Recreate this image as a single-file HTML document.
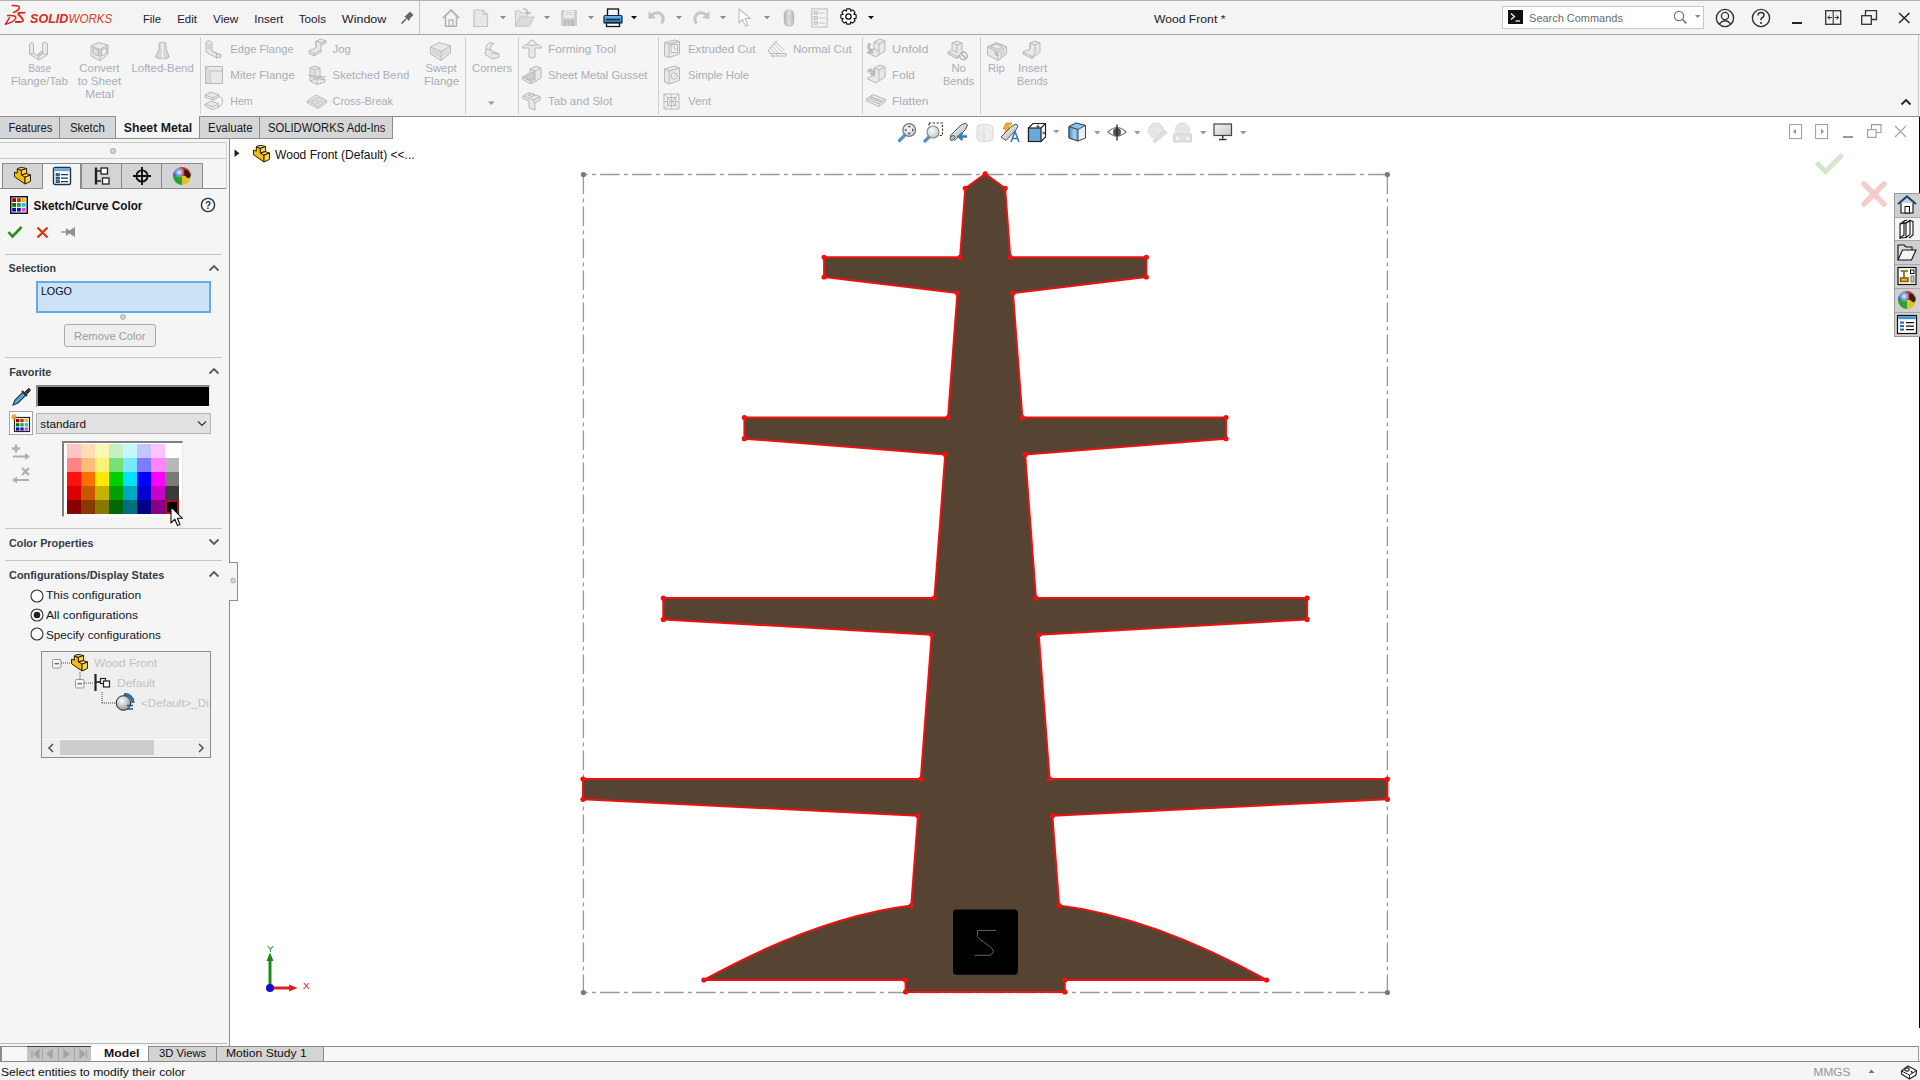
<!DOCTYPE html>
<html><head><meta charset="utf-8"><title>SOLIDWORKS</title>
<style>html,body{margin:0;padding:0;width:1920px;height:1080px;overflow:hidden;font-family:"Liberation Sans", sans-serif;}</style></head>
<body><div style="position:absolute;left:0;top:0;width:1920px;height:1080px;background:#f5f5f5;overflow:hidden"><div style="position:absolute;left:0px;top:0px;width:1920px;height:35px;background:#f4f4f4"></div><div style="position:absolute;left:0px;top:0px;width:1920px;height:1px;background:#b0b0b0"></div><div style="position:absolute;left:0px;top:34px;width:1920px;height:1px;background:#a4a4a4"></div><div style="position:absolute;left:419px;top:1px;width:1px;height:33px;background:#c4c4c4"></div><div style="position:absolute;left:0px;top:35px;width:1920px;height:81px;background:#f5f5f5"></div><div style="position:absolute;left:200px;top:37px;width:1px;height:77px;background:#d0d0d0"></div><div style="position:absolute;left:465px;top:37px;width:1px;height:77px;background:#d0d0d0"></div><div style="position:absolute;left:518px;top:37px;width:1px;height:77px;background:#d0d0d0"></div><div style="position:absolute;left:658px;top:37px;width:1px;height:77px;background:#d0d0d0"></div><div style="position:absolute;left:862px;top:37px;width:1px;height:77px;background:#d0d0d0"></div><div style="position:absolute;left:980px;top:37px;width:1px;height:77px;background:#d0d0d0"></div><div style="position:absolute;left:1918px;top:35px;width:1px;height:81px;background:#c8c8c8"></div><div style="position:absolute;left:230px;top:117px;width:1690px;height:929px;background:#ffffff"></div><div style="position:absolute;left:1919px;top:117px;width:1px;height:911px;background:#000"></div><div style="position:absolute;left:0px;top:116px;width:115px;height:1px;background:#8c8c8c"></div><div style="position:absolute;left:199px;top:116px;width:1721px;height:1px;background:#8c8c8c"></div><div style="position:absolute;left:0px;top:117px;width:59px;height:21px;background:#d6d6d6"></div><div style="position:absolute;left:59px;top:117px;width:56px;height:21px;background:#d6d6d6"></div><div style="position:absolute;left:115px;top:116px;width:84px;height:22px;background:#f5f5f5"></div><div style="position:absolute;left:199px;top:117px;width:60px;height:21px;background:#d6d6d6"></div><div style="position:absolute;left:259px;top:117px;width:133px;height:21px;background:#d6d6d6"></div><div style="position:absolute;left:59px;top:116px;width:1px;height:22px;background:#8c8c8c"></div><div style="position:absolute;left:115px;top:116px;width:1px;height:22px;background:#8c8c8c"></div><div style="position:absolute;left:199px;top:116px;width:1px;height:22px;background:#8c8c8c"></div><div style="position:absolute;left:259px;top:116px;width:1px;height:22px;background:#8c8c8c"></div><div style="position:absolute;left:392px;top:116px;width:1px;height:22px;background:#8c8c8c"></div><div style="position:absolute;left:0px;top:138px;width:393px;height:1px;background:#8a9090"></div><div style="position:absolute;left:0px;top:139px;width:229px;height:907px;background:#f5f5f5"></div><div style="position:absolute;left:229px;top:139px;width:1px;height:907px;background:#8c8c8c"></div><div style="position:absolute;left:0px;top:142px;width:226px;height:1px;background:#c9c9c9"></div><div style="position:absolute;left:226px;top:142px;width:1px;height:47px;background:#d4d4d4"></div><svg style="position:absolute;left:109px;top:147px;" width="8" height="8" viewBox="0 0 8 8"><circle cx="4" cy="4" r="2.6" fill="#d8d8d8" stroke="#a0a0a0" stroke-width="0.9"/></svg><div style="position:absolute;left:0px;top:158px;width:226px;height:1px;background:#c9c9c9"></div><div style="position:absolute;left:0px;top:188px;width:226px;height:1px;background:#8a8a8a"></div><div style="position:absolute;left:2px;top:163px;width:41px;height:26px;background:#d4d4d4;box-sizing:border-box;border:1px solid #8a8a8a"></div><div style="position:absolute;left:42px;top:163px;width:39px;height:26px;background:#f5f5f5;box-sizing:border-box;border:1px solid #8a8a8a;border-bottom:none"></div><div style="position:absolute;left:81px;top:163px;width:41px;height:26px;background:#d4d4d4;box-sizing:border-box;border:1px solid #8a8a8a"></div><div style="position:absolute;left:121px;top:163px;width:41px;height:26px;background:#d4d4d4;box-sizing:border-box;border:1px solid #8a8a8a"></div><div style="position:absolute;left:161px;top:163px;width:42px;height:26px;background:#d4d4d4;box-sizing:border-box;border:1px solid #8a8a8a"></div><div style="position:absolute;left:5px;top:254px;width:217px;height:1px;background:#c6c6c6"></div><div style="position:absolute;left:5px;top:357px;width:217px;height:1px;background:#c6c6c6"></div><div style="position:absolute;left:5px;top:528px;width:217px;height:1px;background:#c6c6c6"></div><div style="position:absolute;left:5px;top:560px;width:217px;height:1px;background:#c6c6c6"></div><svg style="position:absolute;left:0px;top:0px;" width="1920" height="1080" viewBox="0 0 1920 1080"><defs><linearGradient id="wood" x1="0" y1="0" x2="0" y2="1"><stop offset="0" stop-color="#594835"/><stop offset="1" stop-color="#5a4834"/></linearGradient></defs><path d="M583.4,174.5 H1387.4" fill="none" stroke="#999" stroke-width="1.3" stroke-dasharray="19.6 4.4 3.7 4.3" stroke-dashoffset="15.35"/><path d="M583.4,992.5 H1387.4" fill="none" stroke="#999" stroke-width="1.3" stroke-dasharray="19.6 4.4 3.7 4.3" stroke-dashoffset="15.35"/><path d="M583.4,174.5 V992.5" fill="none" stroke="#999" stroke-width="1.3" stroke-dasharray="19.6 4.4 3.7 4.3"/><path d="M1387.4,174.5 V992.5" fill="none" stroke="#999" stroke-width="1.3" stroke-dasharray="19.6 4.4 3.7 4.3"/><circle cx="583.4" cy="174.5" r="2.6" fill="#7a7a7a"/><circle cx="1387.4" cy="174.5" r="2.6" fill="#7a7a7a"/><circle cx="583.4" cy="992.5" r="2.6" fill="#7a7a7a"/><circle cx="1387.4" cy="992.5" r="2.6" fill="#7a7a7a"/><path d="M985.20,173.9 L1005.10,188.30 L1010.30,257.30 L1146.30,257.30 L1146.30,277.00 L1012.99,293.00 L1022.37,417.50 L1226.00,417.50 L1226.00,438.70 L1025.15,454.40 L1035.98,598.10 L1307.10,598.10 L1307.10,619.40 L1038.74,634.80 L1049.61,779.00 L1387.40,779.00 L1387.40,799.30 L1052.38,815.80 L1059.15,905.60 Q1152.00,917.00 1266.60,980.00 L1064.80,980.00 L1064.80,991.90 L905.60,991.90 L905.60,980.00 L703.80,980.00 Q818.40,917.00 911.25,905.60 L911.25,905.60 L918.02,815.80 L583.00,799.30 L583.00,779.00 L920.79,779.00 L931.66,634.80 L663.30,619.40 L663.30,598.10 L934.42,598.10 L945.25,454.40 L744.40,438.70 L744.40,417.50 L948.03,417.50 L957.41,293.00 L824.10,277.00 L824.10,257.30 L960.10,257.30 L965.30,188.30 Z" fill="#574332" stroke="#f01010" stroke-width="2" stroke-linejoin="round"/><circle cx="985.20" cy="173.90" r="2.6" fill="#f01010"/><circle cx="1005.10" cy="188.30" r="2.6" fill="#f01010"/><circle cx="1010.30" cy="257.30" r="2.6" fill="#f01010"/><circle cx="1146.30" cy="257.30" r="2.6" fill="#f01010"/><circle cx="1146.30" cy="277.00" r="2.6" fill="#f01010"/><circle cx="1012.99" cy="293.00" r="2.6" fill="#f01010"/><circle cx="1022.37" cy="417.50" r="2.6" fill="#f01010"/><circle cx="1226.00" cy="417.50" r="2.6" fill="#f01010"/><circle cx="1226.00" cy="438.70" r="2.6" fill="#f01010"/><circle cx="1025.15" cy="454.40" r="2.6" fill="#f01010"/><circle cx="1035.98" cy="598.10" r="2.6" fill="#f01010"/><circle cx="1307.10" cy="598.10" r="2.6" fill="#f01010"/><circle cx="1307.10" cy="619.40" r="2.6" fill="#f01010"/><circle cx="1038.74" cy="634.80" r="2.6" fill="#f01010"/><circle cx="1049.61" cy="779.00" r="2.6" fill="#f01010"/><circle cx="1387.40" cy="779.00" r="2.6" fill="#f01010"/><circle cx="1387.40" cy="799.30" r="2.6" fill="#f01010"/><circle cx="1052.38" cy="815.80" r="2.6" fill="#f01010"/><circle cx="1059.15" cy="905.60" r="2.6" fill="#f01010"/><circle cx="1266.60" cy="980.00" r="2.6" fill="#f01010"/><circle cx="1064.80" cy="980.00" r="2.6" fill="#f01010"/><circle cx="1064.80" cy="991.90" r="2.6" fill="#f01010"/><circle cx="965.30" cy="188.30" r="2.6" fill="#f01010"/><circle cx="960.10" cy="257.30" r="2.6" fill="#f01010"/><circle cx="824.10" cy="257.30" r="2.6" fill="#f01010"/><circle cx="824.10" cy="277.00" r="2.6" fill="#f01010"/><circle cx="957.41" cy="293.00" r="2.6" fill="#f01010"/><circle cx="948.03" cy="417.50" r="2.6" fill="#f01010"/><circle cx="744.40" cy="417.50" r="2.6" fill="#f01010"/><circle cx="744.40" cy="438.70" r="2.6" fill="#f01010"/><circle cx="945.25" cy="454.40" r="2.6" fill="#f01010"/><circle cx="934.42" cy="598.10" r="2.6" fill="#f01010"/><circle cx="663.30" cy="598.10" r="2.6" fill="#f01010"/><circle cx="663.30" cy="619.40" r="2.6" fill="#f01010"/><circle cx="931.66" cy="634.80" r="2.6" fill="#f01010"/><circle cx="920.79" cy="779.00" r="2.6" fill="#f01010"/><circle cx="583.00" cy="779.00" r="2.6" fill="#f01010"/><circle cx="583.00" cy="799.30" r="2.6" fill="#f01010"/><circle cx="918.02" cy="815.80" r="2.6" fill="#f01010"/><circle cx="911.25" cy="905.60" r="2.6" fill="#f01010"/><circle cx="703.80" cy="980.00" r="2.6" fill="#f01010"/><circle cx="905.60" cy="980.00" r="2.6" fill="#f01010"/><circle cx="905.60" cy="991.90" r="2.6" fill="#f01010"/><rect x="953" y="909.6" width="65" height="65.2" rx="3.5" fill="#000"/><path d="M996,930.4 L977.6,930.4 L977.2,936.5 Q979,939 985,943 Q992,947 993.6,951 Q993,954 990,955.3 L975,955.3" fill="none" stroke="#7c6c5c" stroke-width="0.9"/></svg><svg style="position:absolute;left:208px;top:263.5px;" width="12" height="8" viewBox="0 0 12 8"><path d="M1.5,6.5 L6,2 L10.5,6.5" fill="none" stroke="#555b63" stroke-width="1.8"/></svg><svg style="position:absolute;left:208px;top:367.4px;" width="12" height="8" viewBox="0 0 12 8"><path d="M1.5,6.5 L6,2 L10.5,6.5" fill="none" stroke="#555b63" stroke-width="1.8"/></svg><svg style="position:absolute;left:208px;top:538.4px;" width="12" height="8" viewBox="0 0 12 8"><path d="M1.5,1.5 L6,6 L10.5,1.5" fill="none" stroke="#555b63" stroke-width="1.8"/></svg><svg style="position:absolute;left:208px;top:570.3px;" width="12" height="8" viewBox="0 0 12 8"><path d="M1.5,6.5 L6,2 L10.5,6.5" fill="none" stroke="#555b63" stroke-width="1.8"/></svg><svg style="position:absolute;left:14px;top:167px;" width="17" height="18" viewBox="0 0 17 18"><g stroke="#2a1d00" stroke-width="1" stroke-linejoin="round"><path d="M0.5,5.2 L3.3,6.2 L3.3,2 L7.4,3.3 L7.4,7.8 L11,10.2 L11,17 L0.5,9.7 Z" fill="#f4bd08"/><path d="M3.3,2 L4.3,1 L8.1,0.5 L12.6,1.5 L7.4,3.3 Z" fill="#f6dc7a"/><path d="M7.4,3.3 L12.6,1.5 L12.6,6.7 L7.4,7.8 Z" fill="#f7d54a"/><path d="M7.4,7.8 L12.6,6.7 L16.5,8 L11,10.2 Z" fill="#f6dc7a"/><path d="M11,10.2 L16.5,8 L16.5,14.4 L11,17 Z" fill="#f7d54a"/></g></svg><svg style="position:absolute;left:52px;top:166px;" width="20" height="20" viewBox="0 0 20 20"><rect x="1.5" y="1.5" width="17" height="17" rx="1.5" fill="#fff" stroke="#1a3550" stroke-width="1.4"/><rect x="2.2" y="2.2" width="15.6" height="3" fill="#6aa7d8"/><rect x="4" y="7.5" width="3.5" height="2.2" fill="#2f6fa8" stroke="#1a3550" stroke-width="0.6"/><rect x="4" y="11" width="3.5" height="2.2" fill="#2f6fa8" stroke="#1a3550" stroke-width="0.6"/><rect x="4" y="14.5" width="3.5" height="2.2" fill="#2f6fa8" stroke="#1a3550" stroke-width="0.6"/><path d="M9,8.6 H16 M9,12.1 H16 M9,15.6 H16" stroke="#1a3550" stroke-width="1.2"/></svg><svg style="position:absolute;left:93px;top:166px;" width="18" height="20" viewBox="0 0 18 20"><path d="M3,1.5 V18.5" stroke="#222" stroke-width="2.4"/><path d="M3,5 H8 M3,15 H8" stroke="#222" stroke-width="1.6"/><rect x="8" y="2" width="6.5" height="6" fill="#fff" stroke="#222" stroke-width="1.3"/><rect x="9.5" y="12" width="6.5" height="6" fill="#fff" stroke="#222" stroke-width="1.3"/></svg><svg style="position:absolute;left:132px;top:166px;" width="20" height="20" viewBox="0 0 20 20"><circle cx="10" cy="10" r="5.6" fill="none" stroke="#111" stroke-width="1.9"/><path d="M10,1 V19 M1,10 H19" stroke="#111" stroke-width="1.9"/></svg><svg style="position:absolute;left:172px;top:166px;" width="20" height="20" viewBox="0 0 20 20"><defs><radialGradient id="bg1" cx="0.35" cy="0.3" r="0.8"><stop offset="0" stop-color="#fff" stop-opacity="0.9"/><stop offset="0.4" stop-color="#fff" stop-opacity="0"/></radialGradient></defs><circle cx="10" cy="10" r="9" fill="#e8c020"/><path d="M10,10 L1,10 A9,9 0 0 1 10,1 Z" fill="#2b62c8"/><path d="M10,10 L10,1 A9,9 0 0 1 19,10 Z" fill="#d82020"/><path d="M10,10 L1,10 A9,9 0 0 0 10,19 Z" fill="#2aa040"/><ellipse cx="15" cy="8" rx="2.6" ry="4.5" fill="#222" transform="rotate(-30 15 8)"/><circle cx="10" cy="10" r="9" fill="url(#bg1)"/></svg><svg style="position:absolute;left:10px;top:196px;" width="18" height="18" viewBox="0 0 18 18"><rect x="0.75" y="0.75" width="16.5" height="16.5" fill="#fff" stroke="#111" stroke-width="1.5"/><rect x="2.2" y="2.2" width="3.8" height="3.8" fill="#a00000"/><rect x="7.0" y="2.2" width="3.8" height="3.8" fill="#e02010"/><rect x="11.8" y="2.2" width="3.8" height="3.8" fill="#f0c000"/><rect x="2.2" y="7.0" width="3.8" height="3.8" fill="#007000"/><rect x="7.0" y="7.0" width="3.8" height="3.8" fill="#10b020"/><rect x="11.8" y="7.0" width="3.8" height="3.8" fill="#20c0f0"/><rect x="2.2" y="11.8" width="3.8" height="3.8" fill="#0010b0"/><rect x="7.0" y="11.8" width="3.8" height="3.8" fill="#1010e0"/><rect x="11.8" y="11.8" width="3.8" height="3.8" fill="#f040e0"/></svg><svg style="position:absolute;left:200px;top:197px;" width="16" height="16" viewBox="0 0 16 16"><circle cx="8" cy="8" r="6.6" fill="#fff" stroke="#1f2f3f" stroke-width="1.4"/><text x="8" y="12" text-anchor="middle" font-family="Liberation Sans" font-weight="700" font-size="10" fill="#1f2f3f">?</text></svg><svg style="position:absolute;left:7px;top:225px;" width="16" height="14" viewBox="0 0 16 14"><path d="M1.5,7 L5.5,11.5 L14.5,2" fill="none" stroke="#2f8a1f" stroke-width="2.6"/></svg><svg style="position:absolute;left:36px;top:226px;" width="13" height="13" viewBox="0 0 13 13"><path d="M1.5,1.5 L11.5,11.5 M11.5,1.5 L1.5,11.5" stroke="#e0300a" stroke-width="2.2"/></svg><svg style="position:absolute;left:60px;top:226px;" width="16" height="12" viewBox="0 0 16 12"><path d="M1,6 H8" stroke="#8a8a8a" stroke-width="1.3"/><path d="M6,2 L9.5,4.5 L15,1 L15,11 L9.5,7.5 L6,10 Z" fill="#909090"/></svg><div style="position:absolute;left:36px;top:281px;width:175px;height:32px;box-sizing:border-box;background:#cce2f6;border:2px solid #62aae8"></div><svg style="position:absolute;left:119px;top:313px;" width="8" height="8" viewBox="0 0 8 8"><circle cx="4" cy="4" r="2.4" fill="#d8d8d8" stroke="#a0a0a0" stroke-width="0.9"/></svg><div style="position:absolute;left:64px;top:324px;width:92px;height:23px;box-sizing:border-box;background:#efefef;border:1px solid #a8a8a8;border-radius:3px"></div><svg style="position:absolute;left:11px;top:386px;" width="20" height="21" viewBox="0 0 20 21"><path d="M2,19 L4,14 L12,6 L15,9 L7,17 Z" fill="#5aa8d8" stroke="#1a3a5a" stroke-width="1.1"/><path d="M11,5 L16,10" stroke="#333" stroke-width="2.2"/><path d="M13.5,6.5 L17,3 Q18.5,2 19,3.5 Q19.5,5 18,6 L14.5,9.5" fill="#444" stroke="#222" stroke-width="1"/></svg><div style="position:absolute;left:36px;top:385px;width:174px;height:22px;box-sizing:border-box;background:#000;border-top:2px solid #8a8a8a;border-left:2px solid #8a8a8a;border-right:1px solid #e8e8e8;border-bottom:1px solid #fff"></div><svg style="position:absolute;left:9px;top:411px;" width="24" height="24" viewBox="0 0 24 24"><rect x="0.5" y="0.5" width="23" height="23" fill="#fff" stroke="#a4a4a4"/><rect x="5.5" y="6.5" width="15" height="14" fill="#fff" stroke="#222" stroke-width="1.2"/><rect x="7.0" y="8.0" width="3.4" height="3.2" fill="#a00000"/><rect x="11.3" y="8.0" width="3.4" height="3.2" fill="#e02010"/><rect x="15.6" y="8.0" width="3.4" height="3.2" fill="#f0c000"/><rect x="7.0" y="12.2" width="3.4" height="3.2" fill="#007000"/><rect x="11.3" y="12.2" width="3.4" height="3.2" fill="#10b020"/><rect x="15.6" y="12.2" width="3.4" height="3.2" fill="#20c0f0"/><rect x="7.0" y="16.4" width="3.4" height="3.2" fill="#0010b0"/><rect x="11.3" y="16.4" width="3.4" height="3.2" fill="#1010e0"/><rect x="15.6" y="16.4" width="3.4" height="3.2" fill="#f040e0"/><path d="M5,3 V9 M2,6 H8 M2.8,3.8 L7.2,8.2 M7.2,3.8 L2.8,8.2" stroke="#f0a010" stroke-width="1.1"/></svg><div style="position:absolute;left:36px;top:413px;width:175px;height:21px;box-sizing:border-box;background:#e1e1e1;border:1px solid #b4b4b4"></div><svg style="position:absolute;left:197px;top:420px;" width="10" height="8" viewBox="0 0 10 8"><path d="M1,1.5 L5,5.5 L9,1.5" fill="none" stroke="#333" stroke-width="1.2"/></svg><svg style="position:absolute;left:10px;top:443px;" width="22" height="19" viewBox="0 0 22 19"><path d="M6,1.5 V9.5 M2,5.5 H10" stroke="#b0b0b0" stroke-width="2.4"/><path d="M3,13.5 H18" stroke="#b0b0b0" stroke-width="2"/><path d="M15,10 L20,13.5 L15,17 Z" fill="#b0b0b0"/></svg><svg style="position:absolute;left:10px;top:466px;" width="22" height="20" viewBox="0 0 22 20"><path d="M12,2 L19,9 M19,2 L12,9" stroke="#b0b0b0" stroke-width="2.4"/><path d="M4,14 H19" stroke="#b0b0b0" stroke-width="2"/><path d="M7,10.5 L2,14 L7,17.5 Z" fill="#b0b0b0"/></svg><div style="position:absolute;left:62px;top:441px;width:121px;height:76px;box-sizing:border-box;background:#fff;border-top:2px solid #808080;border-left:2px solid #808080;border-right:1px solid #e8e8e8;border-bottom:1px solid #fff"></div><svg style="position:absolute;left:67px;top:444px;" width="112" height="70" viewBox="0 0 112 70"><rect x="0" y="0" width="14" height="14" fill="#ffc4c4"/><rect x="14" y="0" width="14" height="14" fill="#ffdcb8"/><rect x="28" y="0" width="14" height="14" fill="#fff8b4"/><rect x="42" y="0" width="14" height="14" fill="#c4f0c4"/><rect x="56" y="0" width="14" height="14" fill="#c4f8ff"/><rect x="70" y="0" width="14" height="14" fill="#c4c4ff"/><rect x="84" y="0" width="14" height="14" fill="#ffc4ff"/><rect x="98" y="0" width="14" height="14" fill="#ffffff"/><rect x="0" y="14" width="14" height="14" fill="#ff8484"/><rect x="14" y="14" width="14" height="14" fill="#ffbc78"/><rect x="28" y="14" width="14" height="14" fill="#fff078"/><rect x="42" y="14" width="14" height="14" fill="#78e078"/><rect x="56" y="14" width="14" height="14" fill="#78e8ff"/><rect x="70" y="14" width="14" height="14" fill="#7c7cff"/><rect x="84" y="14" width="14" height="14" fill="#ff84ff"/><rect x="98" y="14" width="14" height="14" fill="#b8b8b8"/><rect x="0" y="28" width="14" height="14" fill="#ff1010"/><rect x="14" y="28" width="14" height="14" fill="#ff7000"/><rect x="28" y="28" width="14" height="14" fill="#ffe800"/><rect x="42" y="28" width="14" height="14" fill="#00d000"/><rect x="56" y="28" width="14" height="14" fill="#00e0ff"/><rect x="70" y="28" width="14" height="14" fill="#0000ff"/><rect x="84" y="28" width="14" height="14" fill="#ff00ff"/><rect x="98" y="28" width="14" height="14" fill="#7a7a7a"/><rect x="0" y="42" width="14" height="14" fill="#d80000"/><rect x="14" y="42" width="14" height="14" fill="#c85800"/><rect x="28" y="42" width="14" height="14" fill="#c8b000"/><rect x="42" y="42" width="14" height="14" fill="#00a000"/><rect x="56" y="42" width="14" height="14" fill="#00a8c0"/><rect x="70" y="42" width="14" height="14" fill="#0000d0"/><rect x="84" y="42" width="14" height="14" fill="#c800c8"/><rect x="98" y="42" width="14" height="14" fill="#3a3a3a"/><rect x="0" y="56" width="14" height="14" fill="#880000"/><rect x="14" y="56" width="14" height="14" fill="#883800"/><rect x="28" y="56" width="14" height="14" fill="#887800"/><rect x="42" y="56" width="14" height="14" fill="#006800"/><rect x="56" y="56" width="14" height="14" fill="#007080"/><rect x="70" y="56" width="14" height="14" fill="#000088"/><rect x="84" y="56" width="14" height="14" fill="#880088"/><rect x="98" y="56" width="14" height="14" fill="#000000"/><rect x="99" y="57" width="12" height="12" fill="#000" stroke="#b01010" stroke-width="2"/></svg><svg style="position:absolute;left:170px;top:506px;" width="14" height="22" viewBox="0 0 14 22"><path d="M1,1 L1,17 L4.8,13.2 L7.5,19.5 L10,18.5 L7.4,12.3 L12.5,12.3 Z" fill="#fff" stroke="#111" stroke-width="1.1" stroke-linejoin="round"/></svg><svg style="position:absolute;left:30px;top:589px;" width="14" height="14" viewBox="0 0 14 14"><circle cx="7" cy="7" r="6" fill="#fff" stroke="#333" stroke-width="1.1"/></svg><svg style="position:absolute;left:30px;top:608px;" width="14" height="14" viewBox="0 0 14 14"><circle cx="7" cy="7" r="6" fill="#fff" stroke="#333" stroke-width="1.1"/><circle cx="7" cy="7" r="3.3" fill="#222"/></svg><svg style="position:absolute;left:30px;top:627px;" width="14" height="14" viewBox="0 0 14 14"><circle cx="7" cy="7" r="6" fill="#fff" stroke="#333" stroke-width="1.1"/></svg><div style="position:absolute;left:229px;top:562px;width:9px;height:39px;box-sizing:border-box;background:#f5f5f5;border:1px solid #8c8c8c;border-left:none"></div><div style="position:absolute;left:229px;top:563px;width:1px;height:37px;background:#f5f5f5"></div><svg style="position:absolute;left:229px;top:576px;" width="9" height="9" viewBox="0 0 9 9"><circle cx="4" cy="4.5" r="2.5" fill="#d4d4d4" stroke="#a8a8a8" stroke-width="0.8"/></svg><div style="position:absolute;left:41px;top:651px;width:170px;height:107px;box-sizing:border-box;background:#efefef;border:1px solid #8c8c8c"></div><svg style="position:absolute;left:52px;top:659px;" width="10" height="10" viewBox="0 0 10 10"><rect x="0.5" y="0.5" width="8.5" height="8.5" fill="#f4f4f4" stroke="#9a9a9a" rx="1"/><path d="M2.5,4.75 H7" stroke="#4a4a6a" stroke-width="1.1"/></svg><svg style="position:absolute;left:75px;top:679px;" width="10" height="10" viewBox="0 0 10 10"><rect x="0.5" y="0.5" width="8.5" height="8.5" fill="#f4f4f4" stroke="#9a9a9a" rx="1"/><path d="M2.5,4.75 H7" stroke="#4a4a6a" stroke-width="1.1"/></svg><svg style="position:absolute;left:61px;top:662px;" width="10" height="2" viewBox="0 0 10 2"><path d="M0,1 H10" stroke="#444" stroke-width="1" stroke-dasharray="1 1"/></svg><svg style="position:absolute;left:79px;top:672px;" width="2" height="8" viewBox="0 0 2 8"><path d="M1,0 V8" stroke="#444" stroke-width="1" stroke-dasharray="1 1"/></svg><svg style="position:absolute;left:84px;top:682px;" width="10" height="2" viewBox="0 0 10 2"><path d="M0,1 H10" stroke="#444" stroke-width="1" stroke-dasharray="1 1"/></svg><svg style="position:absolute;left:101px;top:692px;" width="16" height="13" viewBox="0 0 16 13"><path d="M1,0 V11 M1,11 H15" stroke="#444" stroke-width="1" stroke-dasharray="1 1" fill="none"/></svg><svg style="position:absolute;left:71px;top:654px;" width="17" height="18" viewBox="0 0 17 18"><g stroke="#2a1d00" stroke-width="1" stroke-linejoin="round"><path d="M0.5,5.2 L3.3,6.2 L3.3,2 L7.4,3.3 L7.4,7.8 L11,10.2 L11,17 L0.5,9.7 Z" fill="#f4bd08"/><path d="M3.3,2 L4.3,1 L8.1,0.5 L12.6,1.5 L7.4,3.3 Z" fill="#f6dc7a"/><path d="M7.4,3.3 L12.6,1.5 L12.6,6.7 L7.4,7.8 Z" fill="#f7d54a"/><path d="M7.4,7.8 L12.6,6.7 L16.5,8 L11,10.2 Z" fill="#f6dc7a"/><path d="M11,10.2 L16.5,8 L16.5,14.4 L11,17 Z" fill="#f7d54a"/></g></svg><svg style="position:absolute;left:93px;top:673px;" width="18" height="19" viewBox="0 0 18 19"><path d="M2.5,1 V18" stroke="#222" stroke-width="2.2"/><path d="M2.5,9 H8" stroke="#222" stroke-width="1.6"/><rect x="7.5" y="5.5" width="5" height="5" fill="#fff" stroke="#222" stroke-width="1.2"/><rect x="10.5" y="8" width="6" height="6" fill="#fff" stroke="#222" stroke-width="1.2"/></svg><svg style="position:absolute;left:115px;top:693px;" width="20" height="19" viewBox="0 0 20 19"><defs><radialGradient id="dsg" cx="0.4" cy="0.35" r="0.7"><stop offset="0" stop-color="#fff"/><stop offset="1" stop-color="#8a9098"/></radialGradient></defs><path d="M9,1.5 A8,8 0 0 1 18,10" fill="none" stroke="#2f6f9f" stroke-width="3"/><circle cx="8.5" cy="10" r="7.3" fill="url(#dsg)" stroke="#222" stroke-width="1"/><path d="M12,12.5 H18 M12,16 H18" stroke="#1a5a9a" stroke-width="1.6"/></svg><div style="position:absolute;left:42px;top:739px;width:168px;height:1px;background:#fafafa"></div><div style="position:absolute;left:60px;top:740px;width:94px;height:15px;background:#cdcdcd"></div><svg style="position:absolute;left:46px;top:743px;" width="10" height="10" viewBox="0 0 10 10"><path d="M7,1 L3,5 L7,9" fill="none" stroke="#555" stroke-width="1.6"/></svg><svg style="position:absolute;left:196px;top:743px;" width="10" height="10" viewBox="0 0 10 10"><path d="M3,1 L7,5 L3,9" fill="none" stroke="#555" stroke-width="1.6"/></svg><div style="position:absolute;left:0px;top:1043px;width:227px;height:1px;background:#b8b8b8"></div><svg style="position:absolute;left:0px;top:0px;" width="30" height="30" viewBox="0 0 30 30"><g fill="none" stroke="#d8261a" stroke-linecap="round"><path d="M12.2,5.5 Q20,5.3 19.4,8 Q18.5,10.5 13.6,12.5" stroke-width="1.6"/><path d="M7.6,15.6 Q17,14.8 15.6,18.5 Q13.8,22 5.3,24.3 L9.6,17.6" stroke-width="1.5" stroke-linejoin="round"/><path d="M24.6,12.6 L18.6,12.9 Q17.5,13.6 19.5,15.5 Q23.5,19.5 23,20.8 Q22.5,22 15.8,22" stroke-width="1.8"/></g></svg><svg style="position:absolute;left:0;top:0" width="130" height="34"><text x="30" y="22.8" font-family="Liberation Sans" font-style="italic" font-weight="700" font-size="12.4" fill="#d42a1a" textLength="38.4" lengthAdjust="spacingAndGlyphs">SOLID</text><text x="68.6" y="22.8" font-family="Liberation Sans" font-style="italic" font-weight="400" font-size="12.4" fill="#dc3a2a" textLength="43.6" lengthAdjust="spacingAndGlyphs">WORKS</text></svg><svg style="position:absolute;left:400px;top:11px;" width="15" height="14" viewBox="0 0 15 14"><path d="M1.5,12.5 L6,8" stroke="#555" stroke-width="1.4"/><path d="M4.5,5.5 L9,10 L10,7.5 L13.5,4 L10,0.5 L6.5,4 Z" fill="#666"/></svg><svg style="position:absolute;left:441px;top:8px;" width="20" height="20" viewBox="0 0 20 20"><path d="M2,10 L10,2 L18,10" fill="none" stroke="#b4b4b4" stroke-width="1.8"/><path d="M4.5,8.5 V18.3 H15.5 V8.5" fill="none" stroke="#b4b4b4" stroke-width="1.5"/><rect x="8" y="12" width="4" height="6.3" fill="none" stroke="#b4b4b4" stroke-width="1.3"/></svg><svg style="position:absolute;left:473px;top:9px;" width="16" height="19" viewBox="0 0 16 19"><path d="M1,1 H10 L14.5,5.5 V17.5 H1 Z" fill="#e8e8e8" stroke="#c4c4c4" stroke-width="1.2"/><path d="M10,1 V5.5 H14.5" fill="none" stroke="#c4c4c4" stroke-width="1"/></svg><svg style="position:absolute;left:500px;top:16px;" width="6" height="4" viewBox="0 0 6 4"><path d="M0,0 H6 L3,3.2 Z" fill="#8a8a8a"/></svg><svg style="position:absolute;left:514px;top:8px;" width="22" height="20" viewBox="0 0 22 20"><path d="M1.5,18 L1.5,3 H6 L8,5 H13 V18 Z" fill="#e4e4e4" stroke="#c8c8c8" stroke-width="1.1"/><path d="M1.5,18 L6,9 H20 L15.5,18 Z" fill="#dcdcdc" stroke="#c8c8c8" stroke-width="1.1"/><path d="M9,1 Q14,1 14,6 L16.5,4 M14,6 L11.5,4" fill="none" stroke="#bdbdbd" stroke-width="1.6"/></svg><svg style="position:absolute;left:544px;top:16px;" width="6" height="4" viewBox="0 0 6 4"><path d="M0,0 H6 L3,3.2 Z" fill="#8a8a8a"/></svg><svg style="position:absolute;left:560px;top:9px;" width="18" height="18" viewBox="0 0 18 18"><path d="M1,2 Q1,1 2,1 H16 Q17,1 17,2 V16 Q17,17 16,17 H2 Q1,17 1,16 Z" fill="#cfcfcf"/><rect x="4" y="1.5" width="10" height="7.5" fill="#efefef"/><path d="M5.5,3.5 H12.5 M5.5,5.5 H12.5" stroke="#c8c8c8" stroke-width="0.8"/><rect x="4" y="11" width="10" height="6" fill="#bdbdbd"/><path d="M7,11.5 V17 M10,11.5 V17" stroke="#d8d8d8" stroke-width="0.9"/></svg><svg style="position:absolute;left:588px;top:16px;" width="6" height="4" viewBox="0 0 6 4"><path d="M0,0 H6 L3,3.2 Z" fill="#8a8a8a"/></svg><svg style="position:absolute;left:603px;top:8px;" width="20" height="20" viewBox="0 0 20 20"><defs><linearGradient id="prg" x1="0" y1="0" x2="0" y2="1"><stop offset="0" stop-color="#6fc0ee"/><stop offset="1" stop-color="#1f6fb0"/></linearGradient></defs><rect x="4.5" y="1" width="11" height="7" fill="#f4f4f4" stroke="#111" stroke-width="1.3"/><path d="M1,8.5 Q1,7.5 2,7.5 H18 Q19,7.5 19,8.5 V15 H1 Z" fill="url(#prg)" stroke="#0a2a4a" stroke-width="1.2"/><path d="M3,11.5 H17" stroke="#0a2a4a" stroke-width="1.4"/><rect x="3.5" y="15" width="13" height="3.5" fill="#fff" stroke="#111" stroke-width="1.3"/></svg><svg style="position:absolute;left:631px;top:16px;" width="6" height="4" viewBox="0 0 6 4"><path d="M0,0 H6 L3,3.2 Z" fill="#111"/></svg><svg style="position:absolute;left:648px;top:10px;" width="18" height="16" viewBox="0 0 18 16"><path d="M3,5 Q9,1 13,4 Q17,8 13.5,13.5" fill="none" stroke="#c6c6c6" stroke-width="3"/><path d="M0.5,1 L0.5,9 L8,8 Z" fill="#c6c6c6"/></svg><svg style="position:absolute;left:676px;top:16px;" width="6" height="4" viewBox="0 0 6 4"><path d="M0,0 H6 L3,3.2 Z" fill="#8a8a8a"/></svg><svg style="position:absolute;left:692px;top:10px;" width="18" height="16" viewBox="0 0 18 16"><path d="M15,5 Q9,1 5,4 Q1,8 4.5,13.5" fill="none" stroke="#c6c6c6" stroke-width="3"/><path d="M17.5,1 L17.5,9 L10,8 Z" fill="#c6c6c6"/></svg><svg style="position:absolute;left:720px;top:16px;" width="6" height="4" viewBox="0 0 6 4"><path d="M0,0 H6 L3,3.2 Z" fill="#8a8a8a"/></svg><svg style="position:absolute;left:738px;top:8px;" width="14" height="19" viewBox="0 0 14 19"><path d="M1,1 L1,15 L4.5,11.5 L7.5,18 L10,17 L7,10.5 L12.5,10.5 Z" fill="#fff" stroke="#c0c0c0" stroke-width="1.1" stroke-linejoin="round"/></svg><svg style="position:absolute;left:764px;top:16px;" width="6" height="4" viewBox="0 0 6 4"><path d="M0,0 H6 L3,3.2 Z" fill="#8a8a8a"/></svg><svg style="position:absolute;left:783px;top:8px;" width="12" height="20" viewBox="0 0 12 20"><defs><linearGradient id="rbg" x1="0" y1="0" x2="1" y2="0"><stop offset="0" stop-color="#b0b0b0"/><stop offset="0.5" stop-color="#dedede"/><stop offset="1" stop-color="#b4b4b4"/></linearGradient></defs><rect x="0.8" y="1" width="10.4" height="18" rx="5.2" fill="url(#rbg)"/><path d="M6,4 V6 M6,14 V16" stroke="#ececec" stroke-width="1.2"/></svg><svg style="position:absolute;left:811px;top:8px;" width="17" height="20" viewBox="0 0 17 20"><rect x="0.8" y="1" width="15.4" height="18" fill="#f4f4f4" stroke="#c4c4c4" stroke-width="1.2"/><rect x="3" y="3.5" width="3.5" height="2.8" fill="#ddd" stroke="#bdbdbd" stroke-width="0.8"/><rect x="3" y="8.5" width="3.5" height="2.8" fill="#ddd" stroke="#bdbdbd" stroke-width="0.8"/><rect x="3" y="13.5" width="3.5" height="2.8" fill="#ddd" stroke="#bdbdbd" stroke-width="0.8"/><path d="M8,5 H14 M8,10 H14 M8,15 H14" stroke="#c4c4c4" stroke-width="1"/></svg><svg style="position:absolute;left:840px;top:8px;" width="17" height="17" viewBox="0 0 17 17"><path d="M13.89,6.09 L16.11,6.80 L16.11,10.20 L13.89,10.91 L14.01,10.61 L15.09,12.68 L12.68,15.09 L10.61,14.01 L10.91,13.89 L10.20,16.11 L6.80,16.11 L6.09,13.89 L6.39,14.01 L4.32,15.09 L1.91,12.68 L2.99,10.61 L3.11,10.91 L0.89,10.20 L0.89,6.80 L3.11,6.09 L2.99,6.39 L1.91,4.32 L4.32,1.91 L6.39,2.99 L6.09,3.11 L6.80,0.89 L10.20,0.89 L10.91,3.11 L10.61,2.99 L12.68,1.91 L15.09,4.32 L14.01,6.39 Z" fill="#fff" stroke="#111" stroke-width="1.2" stroke-linejoin="round"/><circle cx="8.5" cy="8.5" r="2.7" fill="#fff" stroke="#111" stroke-width="1.3"/></svg><svg style="position:absolute;left:868px;top:16px;" width="6" height="4" viewBox="0 0 6 4"><path d="M0,0 H6 L3,3.2 Z" fill="#111"/></svg><div style="position:absolute;left:1502px;top:6px;width:202px;height:23px;box-sizing:border-box;background:#fff;border:1px solid #c8c8c8"></div><svg style="position:absolute;left:1508px;top:10px;" width="15" height="14" viewBox="0 0 15 14"><rect width="15" height="14" fill="#111"/><path d="M3,3.5 L6.5,6.5 L3,9.5" fill="none" stroke="#fff" stroke-width="1.2"/><path d="M7.5,11 H12" stroke="#fff" stroke-width="1.2"/></svg><svg style="position:absolute;left:1673px;top:10px;" width="15" height="15" viewBox="0 0 15 15"><circle cx="6" cy="6" r="4.6" fill="none" stroke="#777" stroke-width="1.3"/><path d="M9.4,9.4 L13.5,13.5" stroke="#777" stroke-width="1.6"/></svg><svg style="position:absolute;left:1695px;top:15px;" width="6" height="4" viewBox="0 0 6 4"><path d="M0,0 H5.5 L2.75,3 Z" fill="#888"/></svg><svg style="position:absolute;left:1715px;top:8px;" width="20" height="20" viewBox="0 0 20 20"><circle cx="10" cy="10" r="8.6" fill="none" stroke="#333" stroke-width="1.4"/><circle cx="10" cy="8" r="3.6" fill="none" stroke="#333" stroke-width="1.3"/><path d="M4.2,16 Q10,9.5 15.8,16" fill="none" stroke="#333" stroke-width="1.3"/></svg><svg style="position:absolute;left:1751px;top:8px;" width="20" height="20" viewBox="0 0 20 20"><circle cx="10" cy="10" r="8.6" fill="none" stroke="#333" stroke-width="1.4"/><path d="M7,7.6 Q7,4.6 10,4.6 Q13,4.6 13,7.3 Q13,9 10.8,10 Q10,10.5 10,12.3" fill="none" stroke="#333" stroke-width="1.5"/><circle cx="10" cy="15" r="1.1" fill="#333"/></svg><div style="position:absolute;left:1792px;top:22px;width:10px;height:2px;background:#222"></div><svg style="position:absolute;left:1825px;top:10px;" width="17" height="16" viewBox="0 0 17 16"><rect x="0.7" y="0.7" width="15" height="13.6" fill="none" stroke="#333" stroke-width="1.3"/><path d="M8.2,1 V14" stroke="#333" stroke-width="1.1"/><path d="M2.5,7.5 H7 M5,5.5 L2.8,7.5 L5,9.5 M9.5,7.5 H14 M11.5,5.5 L13.7,7.5 L11.5,9.5" fill="none" stroke="#333" stroke-width="1"/></svg><svg style="position:absolute;left:1861px;top:10px;" width="17" height="16" viewBox="0 0 17 16"><rect x="0.7" y="5.7" width="9.6" height="8.6" fill="#f4f4f4" stroke="#333" stroke-width="1.3"/><path d="M4.5,5.5 V0.7 H15.5 V9.5 H10.5" fill="none" stroke="#333" stroke-width="1.3"/></svg><svg style="position:absolute;left:1898px;top:12px;" width="13" height="12" viewBox="0 0 13 12"><path d="M1,1 L11.5,11 M11.5,1 L1,11" stroke="#222" stroke-width="1.5"/></svg><svg style="position:absolute;left:1900px;top:98px;" width="12" height="8" viewBox="0 0 12 8"><path d="M1.5,6.5 L6,2 L10.5,6.5" fill="none" stroke="#222" stroke-width="1.8"/></svg><svg style="position:absolute;left:28px;top:41px;" width="21" height="20" viewBox="0 0 21 20"><g fill="#e8e8e8" stroke="#b8b8b8" stroke-width="1" stroke-linejoin="round"><path d="M1.5,3 L4,1.5 L5.5,2.5 V12 L10.5,15.5 L14.5,12.5 V2 L17,1 L19.5,2.5 V13.5 L11,19 L1.5,13 Z"/><path d="M5.5,12 L1.5,13 M14.5,12.5 L19.5,13.5 M10.5,15.5 L11,19" fill="none"/><path d="M10.5,15.5 L14.5,12.5 L13,10.5 L9.5,13.5 Z" fill="#cfcfcf"/></g></svg><svg style="position:absolute;left:89px;top:41px;" width="21" height="22" viewBox="0 0 21 22"><g fill="#e8e8e8" stroke="#b8b8b8" stroke-width="1" stroke-linejoin="round"><path d="M2,5 L9,1.5 L19,4 V13 L11,20 L2,15 Z"/><path d="M2,5 L11,8.5 L19,4 M11,8.5 V20" fill="none"/><path d="M4,6.5 L9.5,9 V15 L4,12.5 Z" fill="#dedede"/><path d="M12.5,9 L17.5,6.5 V12 L12.5,15 Z" fill="#f2f2f2"/></g></svg><svg style="position:absolute;left:154px;top:41px;" width="17" height="20" viewBox="0 0 17 20"><g fill="#e8e8e8" stroke="#b8b8b8" stroke-width="1" stroke-linejoin="round"><path d="M5,2 Q8.5,0.5 12,2 V8 L15.5,16 Q8.5,19.5 1.5,16 L5,8 Z" fill="#d8d8d8"/><path d="M8.5,1.5 V18" fill="none" stroke="#f4f4f4" stroke-width="1.5"/></g></svg><svg style="position:absolute;left:204px;top:39px;" width="20" height="20" viewBox="0 0 20 20"><g fill="#e8e8e8" stroke="#b8b8b8" stroke-width="1" stroke-linejoin="round"><path d="M2,3 L5,1.5 L8,3.5 V12 L17,16 V18 L12.5,19 L2,13 Z"/><path d="M8,12 L12.5,14.5 V19 M12.5,14.5 L17,16" fill="none"/><path d="M2.5,4 L7.5,6 V11.5 L2.5,9.5 Z" fill="#d4d4d4" stroke="none"/></g></svg><svg style="position:absolute;left:205px;top:65px;" width="18" height="20" viewBox="0 0 18 20"><g fill="#e8e8e8" stroke="#b8b8b8" stroke-width="1" stroke-linejoin="round"><rect x="0.5" y="1.5" width="17" height="17"/><path d="M0.5,1.5 L5,6 H17.5 M5,6 V18.5" fill="none"/><path d="M1,2 L5,6 V18 H1 Z" fill="#dadada" stroke="none"/></g></svg><svg style="position:absolute;left:203px;top:90px;" width="22" height="21" viewBox="0 0 22 21"><g fill="#e8e8e8" stroke="#b8b8b8" stroke-width="1" stroke-linejoin="round"><path d="M2,5 L8,2 L16,5 L10,8 Z"/><path d="M2,5 V7 L10,10 V8 M10,10 L16,7 V5" fill="none"/><path d="M16,6 Q21,9 19,14 Q17,17 14,17" fill="none"/><path d="M2,14 L8,11 L16,14 L10,17 Z"/><path d="M2,14 V16 L10,19.5 L16,17 V15" fill="none"/></g></svg><svg style="position:absolute;left:307px;top:38px;" width="20" height="21" viewBox="0 0 20 21"><g fill="#e8e8e8" stroke="#b8b8b8" stroke-width="1" stroke-linejoin="round"><path d="M9,3 L14,1 L19,3 V5 L14,7 V14 L7,18 L2,15.5 V13 L7,10.5 L9,9.5 Z"/><path d="M9,3 L14,5 L19,3 M14,5 V7 M9,3 V9.5 M2,13 L7,15.5 L14,12 M7,15.5 V18" fill="none"/></g></svg><svg style="position:absolute;left:307px;top:65px;" width="20" height="20" viewBox="0 0 20 20"><g fill="#e8e8e8" stroke="#b8b8b8" stroke-width="1" stroke-linejoin="round"><path d="M3,3 L8,1 L13,3 V12 L18,14.5 V17 L10,19.5 L3,16 Z"/><path d="M3,3 L8,5 L13,3 M8,5 V13 L3,11 M8,13 L13,12 M3,16 L10,13.5 L18,15 M10,13.5 V19.5 M1,10 L19,12" fill="none"/><path d="M4,6 L7.5,7 V8.5 L4,7.5 Z" fill="#d4d4d4" stroke="none"/></g></svg><svg style="position:absolute;left:306px;top:93px;" width="22" height="16" viewBox="0 0 22 16"><g fill="#e8e8e8" stroke="#b8b8b8" stroke-width="1" stroke-linejoin="round"><path d="M1.5,8 L10,2 L20.5,7.5 L12,13.5 Z"/><path d="M1.5,8 V10 L12,15.5 L20.5,9.5 V7.5 M12,13.5 V15.5" fill="none"/><path d="M5,8 L12,4.5 L17,8 L10.5,11 Z M6,7.5 L16,8.5 M10,4.5 L11.5,11" fill="none" stroke="#c8c8c8"/></g></svg><svg style="position:absolute;left:429px;top:41px;" width="23" height="21" viewBox="0 0 23 21"><g fill="#e8e8e8" stroke="#b8b8b8" stroke-width="1" stroke-linejoin="round"><path d="M1.5,6 L10,1.5 L21.5,5 V12 L12,19.5 L1.5,13 Z"/><path d="M1.5,6 L12,10.5 L21.5,5 M12,10.5 V19.5" fill="none"/><path d="M3,7.5 L11,11 V16.5 L3,12.5 Z" fill="#d8d8d8" stroke="none"/><path d="M13,11 L20,7 V11.5 L13,16 Z" fill="#dcdcdc" stroke="none"/></g></svg><svg style="position:absolute;left:483px;top:41px;" width="18" height="19" viewBox="0 0 18 19"><g fill="#e8e8e8" stroke="#b8b8b8" stroke-width="1" stroke-linejoin="round"><path d="M3,8 Q3,2 8,1.5 L11,3 Q7,4 7.5,9 L16,13 V16 L10,18 L2,13.5 Z"/><path d="M7.5,9 L3,8 M7.5,12 L16,13" fill="none"/></g></svg><svg style="position:absolute;left:488px;top:101px;" width="7" height="5" viewBox="0 0 7 5"><path d="M0,0.5 H6.5 L3.25,4 Z" fill="#9a9a9a"/></svg><svg style="position:absolute;left:521px;top:39px;" width="22" height="21" viewBox="0 0 22 21"><g fill="#e8e8e8" stroke="#b8b8b8" stroke-width="1" stroke-linejoin="round"><path d="M1.5,9 Q1.5,6 6,5.5 Q9,1 11,1 Q13,1 16,5.5 Q20.5,6 20.5,9 H14 V18 Q11,20 8,18 V9 Z"/><path d="M6,5.5 Q11,8 16,5.5" fill="none"/></g></svg><svg style="position:absolute;left:521px;top:65px;" width="22" height="21" viewBox="0 0 22 21"><g fill="#e8e8e8" stroke="#b8b8b8" stroke-width="1" stroke-linejoin="round"><path d="M9,4 L15,1 L20,3 V13 L10,19 L1.5,14.5 V12 L9,8 Z"/><path d="M9,4 L14,6 L20,3 M14,6 V15.5 M1.5,12 L10,16.5 L14,14 M10,16.5 V19" fill="none"/><path d="M4,12.5 L13,6.5 L13,13.5 L9.5,15 Z" fill="#d0d0d0"/></g></svg><svg style="position:absolute;left:522px;top:91px;" width="20" height="20" viewBox="0 0 20 20"><g fill="#e8e8e8" stroke="#b8b8b8" stroke-width="1" stroke-linejoin="round"><path d="M1,5 L7,1.5 L18,5.5 V9 L13,12 V19 L7,17 V10 L1,7.5 Z"/><path d="M1,5 L12,9 L18,5.5 M12,9 V12.5 M6,4 L9,2.5 L13,4 L10,5.5 Z" fill="none"/></g></svg><svg style="position:absolute;left:663px;top:39px;" width="18" height="20" viewBox="0 0 18 20"><g fill="#e8e8e8" stroke="#b8b8b8" stroke-width="1" stroke-linejoin="round"><path d="M1.5,3.5 L12,1 L16.5,2.5 V15 L6,18.5 L1.5,17 Z"/><path d="M1.5,3.5 L6,5 L16.5,2.5 M6,5 V18.5" fill="none"/><rect x="8" y="5.5" width="6.5" height="8" fill="#f2f2f2"/><path d="M11,6.5 V10 H13.5" fill="none"/></g></svg><svg style="position:absolute;left:663px;top:65px;" width="18" height="20" viewBox="0 0 18 20"><g fill="#e8e8e8" stroke="#b8b8b8" stroke-width="1" stroke-linejoin="round"><path d="M1.5,4 L12,1 L16.5,3 V15.5 L6,19 L1.5,17 Z"/><path d="M1.5,4 L6,6 L16.5,3 M6,6 V19" fill="none"/><circle cx="11.2" cy="11" r="3.2" fill="#f2f2f2"/><path d="M10,12.5 L12.5,9.5" fill="none"/></g></svg><svg style="position:absolute;left:663px;top:93px;" width="17" height="17" viewBox="0 0 17 17"><g fill="#e8e8e8" stroke="#b8b8b8" stroke-width="1" stroke-linejoin="round"><rect x="1" y="1" width="15" height="15" fill="#f2f2f2"/><path d="M1,1 L16,16 M16,1 L1,16 M8.5,1 V16 M1,8.5 H16" fill="none" stroke="#c4c4c4"/><rect x="4.5" y="4.5" width="8" height="8" fill="none"/></g></svg><svg style="position:absolute;left:766px;top:39px;" width="21" height="20" viewBox="0 0 21 20"><g fill="#e8e8e8" stroke="#b8b8b8" stroke-width="1" stroke-linejoin="round"><path d="M11,1.5 L2,12 L5,14.5 L20,14.5 V17 L5,17" fill="none"/><path d="M3,8 L12,17 M5,6 L13,14.5 M7,3.5 L16,13 M9,2 L18,11" fill="none" stroke="#c8c8c8"/><path d="M2,12 L8,18.5" fill="none"/></g></svg><svg style="position:absolute;left:865px;top:38px;" width="22" height="21" viewBox="0 0 22 21"><g fill="#e8e8e8" stroke="#b8b8b8" stroke-width="1" stroke-linejoin="round"><path d="M9,4 L15,1 L20,3 V13 L11,19 L2,14.5 L9,11 Z"/><path d="M9,4 L14,6 L20,3 M14,6 V16 M9,11 L14,13" fill="none"/><path d="M4,5 Q1,10 5,13 L3,14.5 L8,15 L7,10.5 L5.5,12 Q3.5,9 5.5,6 Z" fill="#bdbdbd"/></g></svg><svg style="position:absolute;left:865px;top:64px;" width="22" height="21" viewBox="0 0 22 21"><g fill="#e8e8e8" stroke="#b8b8b8" stroke-width="1" stroke-linejoin="round"><path d="M9,4 L15,1 L20,3 V13 L11,19 L2,14.5 L9,11 Z"/><path d="M9,4 L14,6 L20,3 M14,6 V16 M9,4 V11" fill="none"/><path d="M3,6 Q7,3 8,8 L10,6.5 L9.5,12 L5,10 L7,9 Q6,6 3.5,8.5 Z" fill="#bdbdbd"/></g></svg><svg style="position:absolute;left:865px;top:93px;" width="22" height="15" viewBox="0 0 22 15"><g fill="#e8e8e8" stroke="#b8b8b8" stroke-width="1" stroke-linejoin="round"><path d="M1.5,6 L8,1.5 L20.5,6.5 L14,11 Z"/><path d="M1.5,6 V8 L14,13.5 L20.5,8.5 V6.5 M14,11 V13.5 M5.5,3.5 L18,8.5 M4,4.5 L16.5,9.5" fill="none"/></g></svg><svg style="position:absolute;left:946px;top:40px;" width="23" height="21" viewBox="0 0 23 21"><g fill="#e8e8e8" stroke="#b8b8b8" stroke-width="1" stroke-linejoin="round"><path d="M6,3 L11,1 L16,3 V11 L20,13 L11,18.5 L2,14 V12 L6,10 Z"/><path d="M6,3 L11,5 L16,3 M11,5 V12.5 L6,10 M2,12 L11,16.5 L20,13 M11,16.5 V18.5" fill="none"/><circle cx="17.5" cy="16" r="3.8" fill="#f0f0f0" stroke="#aaa" stroke-width="1.2"/><path d="M15,13.5 L20,18.5" stroke="#aaa" stroke-width="1.2"/></g></svg><svg style="position:absolute;left:986px;top:41px;" width="22" height="20" viewBox="0 0 22 20"><g fill="#e8e8e8" stroke="#b8b8b8" stroke-width="1" stroke-linejoin="round"><path d="M1.5,6 L10,1.5 L20.5,5.5 V13 L12,19.5 L1.5,14 Z"/><path d="M1.5,6 L12,11 L20.5,5.5 M12,11 V19.5 M4,5.5 L10,3 L17,5.5 L12,8.5 Z" fill="none"/><path d="M8,10 L11,15 L10,11.5" fill="none" stroke="#aaa"/><path d="M14,11 L18.5,8.5 V14 L14,17 Z" fill="#d4d4d4" stroke="none"/></g></svg><svg style="position:absolute;left:1021px;top:40px;" width="21" height="21" viewBox="0 0 21 21"><g fill="#e8e8e8" stroke="#b8b8b8" stroke-width="1" stroke-linejoin="round"><path d="M9,3 L14,1 L19,3 V12 L11,18.5 L2,14 V12 L9,9 Z"/><path d="M9,3 L14,5 L19,3 M14,5 V14 M2,12 L11,16.5 L14,14 M11,16.5 V18.5 M9,3 V9" fill="none"/></g></svg><svg style="position:absolute;left:897px;top:122px;" width="20" height="21" viewBox="0 0 20 21"><defs><radialGradient id="lg1" cx="0.4" cy="0.35" r="0.7"><stop offset="0" stop-color="#fafafa"/><stop offset="1" stop-color="#c8ccd0"/></radialGradient></defs><path d="M2.5,18.5 L7.5,13.5" stroke="#5a90c0" stroke-width="3.2" stroke-linecap="round"/><circle cx="12.2" cy="8" r="6.3" fill="url(#lg1)" stroke="#777" stroke-width="1.3"/><path d="M12.2,3.5 L10.7,5.2 H13.7 Z M12.2,12.5 L10.7,10.8 H13.7 Z M7.7,8 L9.4,6.5 V9.5 Z M16.7,8 L15,6.5 V9.5 Z" fill="#333"/></svg><svg style="position:absolute;left:922px;top:122px;" width="22" height="21" viewBox="0 0 22 21"><defs><radialGradient id="lg2" cx="0.4" cy="0.35" r="0.7"><stop offset="0" stop-color="#fafafa"/><stop offset="1" stop-color="#c4c8cc"/></radialGradient></defs><rect x="7" y="1" width="13.5" height="12.5" fill="none" stroke="#333" stroke-width="1.2" stroke-dasharray="2.2 1.6"/><path d="M3,19 L7.5,14.5" stroke="#5a90c0" stroke-width="3.2" stroke-linecap="round"/><circle cx="11" cy="10" r="6" fill="url(#lg2)" stroke="#888" stroke-width="1.2"/></svg><svg style="position:absolute;left:949px;top:122px;" width="20" height="20" viewBox="0 0 20 20"><defs><linearGradient id="tg" x1="0" y1="0" x2="1" y2="1"><stop offset="0" stop-color="#fff"/><stop offset="1" stop-color="#a8acb0"/></linearGradient></defs><path d="M1,14 L12,3 L16.5,1 L18.5,3 L16.5,7.5 L5.5,18.5 Z" fill="url(#tg)" stroke="#555" stroke-width="1"/><ellipse cx="3.5" cy="16" rx="2" ry="3" transform="rotate(45 3.5 16)" fill="#bbb" stroke="#555" stroke-width="0.8"/><path d="M18,14.5 H10.5 M13.5,11 L9.5,14.5 L13.5,18" fill="none" stroke="#3a80b8" stroke-width="2.4"/></svg><svg style="position:absolute;left:975px;top:123px;" width="20" height="20" viewBox="0 0 20 20"><path d="M2,5 Q2,1.5 10,1.5 Q18,1.5 18,5 V15 Q18,18.5 10,18.5 Q2,18.5 2,15 Z" fill="#eeeeee" stroke="#dadada" stroke-width="1.1"/><path d="M9,3 V18 M4,7 L8,11 M4,11 L8,15 M12,6 L16,10" stroke="#d8d8d8" stroke-width="1"/></svg><svg style="position:absolute;left:1000px;top:122px;" width="21" height="21" viewBox="0 0 21 21"><path d="M6,1 H12 L8,6 H11 L4,13 L6,7 H3 Z" fill="#f0b020" stroke="#d07010" stroke-width="0.6"/><path d="M1,15 L12,4 L16,2 L18,4 L16,8 L6,18.5 Z" fill="url(#tg)" stroke="#555" stroke-width="1"/><path d="M11,20 L15,9.5 L19,20 M12.5,16.5 H17.5" fill="none" stroke="#3a7ab0" stroke-width="1.6"/></svg><svg style="position:absolute;left:1027px;top:122px;" width="20" height="21" viewBox="0 0 20 21"><path d="M1.5,6 L6,1.5 H18.5 V15 L14,19.5 H1.5 Z" fill="#fff" stroke="#222" stroke-width="1.2"/><rect x="1.5" y="6" width="12.5" height="13.5" fill="#6aaad8" stroke="#222" stroke-width="1.2"/><path d="M14,6 L18.5,1.5" stroke="#222" stroke-width="1.1"/><path d="M11,2.5 V5.5 M9.5,4 L11,5.5 L12.5,4 M15.5,11 H17.5 M16,9.5 L17.5,11 L16,12.5" fill="none" stroke="#222" stroke-width="0.9"/></svg><svg style="position:absolute;left:1053px;top:130px;" width="7" height="4" viewBox="0 0 7 4"><path d="M0,0 H6.5 L3.25,3.5 Z" fill="#9a9a9a"/></svg><svg style="position:absolute;left:1068px;top:122px;" width="19" height="20" viewBox="0 0 19 20"><defs><linearGradient id="cg" x1="0" y1="0" x2="1" y2="0"><stop offset="0" stop-color="#4a8ac0"/><stop offset="0.6" stop-color="#a8d0ee"/><stop offset="1" stop-color="#6aa0cc"/></linearGradient></defs><path d="M1,4.5 L8,1 L17.5,3.5 V16 L10,19 L1,16 Z" fill="#eee" stroke="#444" stroke-width="1"/><path d="M1,4.5 L10,7.5 V19 L1,16 Z" fill="url(#cg)" stroke="#2a4a6a" stroke-width="1"/><path d="M1,4.5 L8,1 L17.5,3.5 L10,7.5 Z" fill="#8cc0e8" stroke="#2a4a6a" stroke-width="0.9"/></svg><svg style="position:absolute;left:1094px;top:131px;" width="7" height="4" viewBox="0 0 7 4"><path d="M0,0 H6.5 L3.25,3.5 Z" fill="#9a9a9a"/></svg><svg style="position:absolute;left:1107px;top:124px;" width="20" height="17" viewBox="0 0 20 17"><path d="M1,8 Q10,-1 19,8 Q10,16 1,8 Z" fill="#fff" stroke="#777" stroke-width="1.1"/><circle cx="10" cy="8" r="4" fill="#555"/><path d="M10,0.5 V16.5" stroke="#222" stroke-width="1.3"/></svg><svg style="position:absolute;left:1134px;top:131px;" width="7" height="4" viewBox="0 0 7 4"><path d="M0,0 H6.5 L3.25,3.5 Z" fill="#9a9a9a"/></svg><svg style="position:absolute;left:1147px;top:122px;" width="21" height="21" viewBox="0 0 21 21"><circle cx="9" cy="8.5" r="7.5" fill="#e6e6e6" stroke="#dadada"/><path d="M17.5,8 L20,10.5 L9,20 L6.5,20 L7,17.5 Z" fill="#e0e0e0" stroke="#d4d4d4"/></svg><svg style="position:absolute;left:1172px;top:122px;" width="21" height="21" viewBox="0 0 21 21"><circle cx="10.5" cy="8" r="7" fill="#e6e6e6" stroke="#dadada"/><path d="M1.5,12 H19.5 V20 H1.5 Z" fill="#e0e0e0" stroke="#d6d6d6"/><rect x="4" y="15" width="3" height="3" fill="#f6f6f6"/><rect x="14" y="15" width="3" height="3" fill="#f6f6f6"/></svg><svg style="position:absolute;left:1200px;top:131px;" width="7" height="4" viewBox="0 0 7 4"><path d="M0,0 H6.5 L3.25,3.5 Z" fill="#9a9a9a"/></svg><svg style="position:absolute;left:1213px;top:123px;" width="20" height="18" viewBox="0 0 20 18"><defs><linearGradient id="mg" x1="0" y1="0" x2="1" y2="1"><stop offset="0" stop-color="#f4f4f4"/><stop offset="1" stop-color="#c8c8c8"/></linearGradient></defs><rect x="1" y="1" width="17.5" height="11.5" fill="url(#mg)" stroke="#444" stroke-width="1.2"/><path d="M9.7,12.5 V15.5 M6,16.5 H13.5" stroke="#333" stroke-width="1.5"/></svg><svg style="position:absolute;left:1240px;top:131px;" width="7" height="4" viewBox="0 0 7 4"><path d="M0,0 H6.5 L3.25,3.5 Z" fill="#9a9a9a"/></svg><svg style="position:absolute;left:1789px;top:124px;" width="14" height="16" viewBox="0 0 14 16"><rect x="0.6" y="0.6" width="12" height="14" fill="none" stroke="#9a9a9a" stroke-width="1"/><path d="M4,7.6 L7,4.8 V10.4 Z" fill="#9a9a9a"/></svg><svg style="position:absolute;left:1815px;top:124px;" width="14" height="16" viewBox="0 0 14 16"><rect x="0.6" y="0.6" width="12" height="14" fill="none" stroke="#9a9a9a" stroke-width="1"/><path d="M9,7.6 L6,4.8 V10.4 Z" fill="#9a9a9a"/></svg><div style="position:absolute;left:1843px;top:136px;width:10px;height:2px;background:#9a9a9a"></div><svg style="position:absolute;left:1867px;top:124px;" width="15" height="14" viewBox="0 0 15 14"><rect x="0.6" y="5.6" width="8.5" height="7.8" fill="#fff" stroke="#9a9a9a" stroke-width="1.1"/><path d="M4.5,5.5 V0.6 H14 V8.5 H9.2" fill="none" stroke="#9a9a9a" stroke-width="1.1"/></svg><svg style="position:absolute;left:1894px;top:125px;" width="13" height="13" viewBox="0 0 13 13"><path d="M1,1 L12,12 M12,1 L1,12" stroke="#a4a4a4" stroke-width="1.2"/></svg><svg style="position:absolute;left:1815px;top:152px;" width="30" height="26" viewBox="0 0 30 26"><path d="M3,12 L10.5,19.5 L26,4" fill="none" stroke="#d4e6cc" stroke-width="5" stroke-linecap="round"/></svg><svg style="position:absolute;left:1860px;top:180px;" width="28" height="28" viewBox="0 0 28 28"><path d="M4,4 L24,24 M24,4 L4,24" stroke="#f4cccc" stroke-width="5.5" stroke-linecap="round"/></svg><div style="position:absolute;left:1894px;top:193px;width:26px;height:144px;background:#d0d0d0;box-sizing:border-box;border:1px solid #9a9a9a;border-right:none"></div><div style="position:absolute;left:1895px;top:217px;width:25px;height:1px;background:#a8a8a8"></div><div style="position:absolute;left:1895px;top:240px;width:25px;height:1px;background:#a8a8a8"></div><div style="position:absolute;left:1895px;top:264px;width:25px;height:1px;background:#a8a8a8"></div><div style="position:absolute;left:1895px;top:288px;width:25px;height:1px;background:#a8a8a8"></div><div style="position:absolute;left:1895px;top:312px;width:25px;height:1px;background:#a8a8a8"></div><div style="position:absolute;left:1895px;top:218px;width:25px;height:22px;background:#f4f4f4"></div><div style="position:absolute;left:1919px;top:117px;width:1px;height:76px;background:#000"></div><svg style="position:absolute;left:1896px;top:195px;" width="22" height="20" viewBox="0 0 22 20"><path d="M2,9 L11,1.5 L20,9" fill="none" stroke="#1f5f9f" stroke-width="2.2"/><path d="M2,9 L11,1.5 L20,9" fill="none" stroke="#0a2a4a" stroke-width="0.8"/><path d="M5,8 V18 H17 V8" fill="#fff" stroke="#111" stroke-width="1.1"/><rect x="9" y="11.5" width="4.5" height="6.5" fill="#fff" stroke="#111" stroke-width="1"/></svg><svg style="position:absolute;left:1898px;top:219px;" width="18" height="20" viewBox="0 0 18 20"><path d="M2,5 L6,2 V16 L2,19 Z M6,2 L9,1 M8,4 L12,1.5 V15.5 L8,18.5 M12,1.5 L15,2.5 V16 L11,19" fill="#fff" stroke="#111" stroke-width="1.1"/><path d="M2,5 L8,4 V18.5 L2,19 M8,4 L12,1.5" fill="none" stroke="#111" stroke-width="1.1"/></svg><svg style="position:absolute;left:1896px;top:242px;" width="22" height="20" viewBox="0 0 22 20"><path d="M2,18 V3 H8 L10,5 H16 V8" fill="#ddd" stroke="#111" stroke-width="1.1"/><path d="M2,18 L6.5,8 H20 L15.5,18 Z" fill="#f4f4f4" stroke="#111" stroke-width="1.1"/></svg><svg style="position:absolute;left:1897px;top:266px;" width="20" height="20" viewBox="0 0 20 20"><rect x="1" y="1.5" width="18" height="17" fill="#fff" stroke="#111" stroke-width="1.2"/><path d="M3.5,5 H11 M7,5 V12 M3.5,12 H11 V15.5 H3.5 Z" fill="#f0b818" stroke="#8a6000" stroke-width="1.6"/><rect x="13.5" y="4" width="3.5" height="3.5" fill="#fff" stroke="#111"/><rect x="14" y="10" width="3" height="6" fill="#ccc" stroke="#555" stroke-width="0.8"/></svg><svg style="position:absolute;left:1897px;top:290px;" width="20" height="20" viewBox="0 0 20 20"><defs><radialGradient id="bg1" cx="0.35" cy="0.3" r="0.8"><stop offset="0" stop-color="#fff" stop-opacity="0.9"/><stop offset="0.4" stop-color="#fff" stop-opacity="0"/></radialGradient></defs><circle cx="10" cy="10" r="9" fill="#e8c020"/><path d="M10,10 L1,10 A9,9 0 0 1 10,1 Z" fill="#2b62c8"/><path d="M10,10 L10,1 A9,9 0 0 1 19,10 Z" fill="#d82020"/><path d="M10,10 L1,10 A9,9 0 0 0 10,19 Z" fill="#2aa040"/><ellipse cx="15" cy="8" rx="2.6" ry="4.5" fill="#222" transform="rotate(-30 15 8)"/><circle cx="10" cy="10" r="9" fill="url(#bg1)"/></svg><svg style="position:absolute;left:1896px;top:314px;" width="22" height="21" viewBox="0 0 22 21"><rect x="1.5" y="1.5" width="19" height="18" fill="#fff" stroke="#111" stroke-width="1.2"/><rect x="2.2" y="2.2" width="17.6" height="3" fill="#4a90d0"/><rect x="4" y="7.5" width="4" height="2.2" fill="#2f6fa8"/><rect x="4" y="11" width="4" height="2.2" fill="#2f6fa8"/><rect x="4" y="14.5" width="4" height="2.2" fill="#2f6fa8"/><path d="M10,8.6 H18 M10,12.1 H18 M10,15.6 H18" stroke="#111" stroke-width="1.2"/></svg><svg style="position:absolute;left:234px;top:149px;" width="6" height="9" viewBox="0 0 6 9"><path d="M0.5,0.5 L5.5,4.25 L0.5,8 Z" fill="#222"/></svg><svg style="position:absolute;left:253px;top:145px;" width="17" height="18" viewBox="0 0 17 18"><g stroke="#2a1d00" stroke-width="1" stroke-linejoin="round"><path d="M0.5,5.2 L3.3,6.2 L3.3,2 L7.4,3.3 L7.4,7.8 L11,10.2 L11,17 L0.5,9.7 Z" fill="#f4bd08"/><path d="M3.3,2 L4.3,1 L8.1,0.5 L12.6,1.5 L7.4,3.3 Z" fill="#f6dc7a"/><path d="M7.4,3.3 L12.6,1.5 L12.6,6.7 L7.4,7.8 Z" fill="#f7d54a"/><path d="M7.4,7.8 L12.6,6.7 L16.5,8 L11,10.2 Z" fill="#f6dc7a"/><path d="M11,10.2 L16.5,8 L16.5,14.4 L11,17 Z" fill="#f7d54a"/></g></svg><svg style="position:absolute;left:262px;top:950px;" width="36" height="46" viewBox="0 0 36 46"><path d="M8,37.5 V10" stroke="#1a8a1a" stroke-width="3"/><path d="M4.5,11 L8,2.5 L11.5,11 Z" fill="#1a8a1a"/><path d="M8,38 H28" stroke="#e02020" stroke-width="3"/><path d="M27,34.5 L35.5,38 L27,41.5 Z" fill="#e02020"/><circle cx="8" cy="38" r="4" fill="#1010c8"/></svg><div style="position:absolute;left:0px;top:1046px;width:1919px;height:1px;background:#8c8c8c"></div><div style="position:absolute;left:0px;top:1047px;width:1919px;height:14px;background:#f6f6f6"></div><div style="position:absolute;left:0px;top:1061px;width:1920px;height:1px;background:#8c8c8c"></div><div style="position:absolute;left:1918px;top:1046px;width:1px;height:15px;background:#9a9a9a"></div><div style="position:absolute;left:0px;top:1046px;width:2px;height:15px;background:#8c8c8c"></div><div style="position:absolute;left:27px;top:1046px;width:64px;height:15px;background:#c4c4c4;box-sizing:border-box;border-top:1px solid #404040"></div><div style="position:absolute;left:42px;top:1047px;width:1px;height:14px;background:#a8a8a8"></div><div style="position:absolute;left:58px;top:1047px;width:1px;height:14px;background:#a8a8a8"></div><div style="position:absolute;left:74px;top:1047px;width:1px;height:14px;background:#a8a8a8"></div><svg style="position:absolute;left:27px;top:1047px;" width="64" height="14" viewBox="0 0 64 14"><path d="M5,3 V11 M12,3 L7,7 L12,11 Z M25,3 L20,7 L25,11 Z M37,3 L42,7 L37,11 Z M53,3 L58,7 L53,11 Z M59.5,3 V11" fill="#a4a4a4" stroke="#a4a4a4" stroke-width="1.2"/></svg><div style="position:absolute;left:91px;top:1046px;width:57px;height:15px;background:#fff"></div><div style="position:absolute;left:148px;top:1047px;width:68px;height:14px;background:#d4d4d4;box-sizing:border-box;border-left:1px solid #8c8c8c"></div><div style="position:absolute;left:216px;top:1047px;width:108px;height:14px;background:#d4d4d4;box-sizing:border-box;border-left:1px solid #8c8c8c;border-right:1px solid #8c8c8c"></div><div style="position:absolute;left:0px;top:1062px;width:1920px;height:18px;background:#f5f5f5"></div><svg style="position:absolute;left:1868px;top:1069px;" width="7" height="5" viewBox="0 0 7 5"><path d="M0.5,4 L3.5,0.5 L6.5,4 Z" fill="#777"/></svg><svg style="position:absolute;left:1900px;top:1064px;" width="18" height="16" viewBox="0 0 18 16"><path d="M1.5,7 L8,2 L16.5,6.5 L16,11 L9.5,15 L1.5,10 Z" fill="#fff" stroke="#222" stroke-width="1.2" stroke-linejoin="round"/><path d="M1.5,7 L9.5,11 L16.5,6.5 M9.5,11 V15" fill="none" stroke="#222" stroke-width="1"/><ellipse cx="7" cy="5.5" rx="2.2" ry="1.6" fill="none" stroke="#222" stroke-width="1.1"/><path d="M11,7 L12.5,9" stroke="#222" stroke-width="1.4"/></svg><svg style="position:absolute;left:0;top:0" width="1920" height="1080" font-family="Liberation Sans, sans-serif"><defs><clipPath id="clipTree"><rect x="42" y="652" width="167" height="86"/></clipPath></defs><text x="142.9" y="23.1" font-size="11.5" font-weight="400" fill="#1b1b2b" textLength="18.2" lengthAdjust="spacingAndGlyphs" >File</text><text x="177.2" y="23.1" font-size="11.5" font-weight="400" fill="#1b1b2b" textLength="19.7" lengthAdjust="spacingAndGlyphs" >Edit</text><text x="213.0" y="23.1" font-size="11.5" font-weight="400" fill="#1b1b2b" textLength="25.4" lengthAdjust="spacingAndGlyphs" >View</text><text x="254.2" y="23.1" font-size="11.5" font-weight="400" fill="#1b1b2b" textLength="29.1" lengthAdjust="spacingAndGlyphs" >Insert</text><text x="298.8" y="23.1" font-size="11.5" font-weight="400" fill="#1b1b2b" textLength="27.2" lengthAdjust="spacingAndGlyphs" >Tools</text><text x="341.8" y="23.1" font-size="11.5" font-weight="400" fill="#1b1b2b" textLength="44.6" lengthAdjust="spacingAndGlyphs" >Window</text><text x="1153.9" y="22.5" font-size="11.5" font-weight="400" fill="#1b1b1b" textLength="71.5" lengthAdjust="spacingAndGlyphs" >Wood Front *</text><text x="1529.1" y="22.3" font-size="11" font-weight="400" fill="#6b6b6b" textLength="93.8" lengthAdjust="spacingAndGlyphs" >Search Commands</text><text x="28.5" y="71.7" font-size="10.5" font-weight="400" fill="#a9aeb5" textLength="22.4" lengthAdjust="spacingAndGlyphs" >Base</text><text x="10.9" y="84.7" font-size="10.5" font-weight="400" fill="#a9aeb5" textLength="57.0" lengthAdjust="spacingAndGlyphs" >Flange/Tab</text><text x="79.3" y="71.7" font-size="10.5" font-weight="400" fill="#a9aeb5" textLength="40.2" lengthAdjust="spacingAndGlyphs" >Convert</text><text x="77.8" y="84.7" font-size="10.5" font-weight="400" fill="#a9aeb5" textLength="43.5" lengthAdjust="spacingAndGlyphs" >to Sheet</text><text x="85.3" y="97.7" font-size="10.5" font-weight="400" fill="#a9aeb5" textLength="28.7" lengthAdjust="spacingAndGlyphs" >Metal</text><text x="131.4" y="71.7" font-size="10.5" font-weight="400" fill="#a9aeb5" textLength="62.5" lengthAdjust="spacingAndGlyphs" >Lofted-Bend</text><text x="425.4" y="71.7" font-size="10.5" font-weight="400" fill="#a9aeb5" textLength="31.3" lengthAdjust="spacingAndGlyphs" >Swept</text><text x="423.9" y="84.7" font-size="10.5" font-weight="400" fill="#a9aeb5" textLength="35.3" lengthAdjust="spacingAndGlyphs" >Flange</text><text x="472.1" y="71.7" font-size="10.5" font-weight="400" fill="#a9aeb5" textLength="40.1" lengthAdjust="spacingAndGlyphs" >Corners</text><text x="951.4" y="71.7" font-size="10.5" font-weight="400" fill="#a9aeb5" textLength="14.5" lengthAdjust="spacingAndGlyphs" >No</text><text x="942.9" y="84.7" font-size="10.5" font-weight="400" fill="#a9aeb5" textLength="31.3" lengthAdjust="spacingAndGlyphs" >Bends</text><text x="987.9" y="71.7" font-size="10.5" font-weight="400" fill="#a9aeb5" textLength="17.0" lengthAdjust="spacingAndGlyphs" >Rip</text><text x="1017.9" y="71.7" font-size="10.5" font-weight="400" fill="#a9aeb5" textLength="29.3" lengthAdjust="spacingAndGlyphs" >Insert</text><text x="1017.1" y="84.7" font-size="10.5" font-weight="400" fill="#a9aeb5" textLength="30.8" lengthAdjust="spacingAndGlyphs" >Bends</text><text x="230.3" y="53" font-size="10.5" font-weight="400" fill="#a9aeb5" textLength="63.4" lengthAdjust="spacingAndGlyphs" >Edge Flange</text><text x="230.3" y="78.8" font-size="10.5" font-weight="400" fill="#a9aeb5" textLength="64.4" lengthAdjust="spacingAndGlyphs" >Miter Flange</text><text x="230.3" y="104.7" font-size="10.5" font-weight="400" fill="#a9aeb5" textLength="22.4" lengthAdjust="spacingAndGlyphs" >Hem</text><text x="332.6" y="53" font-size="10.5" font-weight="400" fill="#a9aeb5" textLength="18.3" lengthAdjust="spacingAndGlyphs" >Jog</text><text x="332.6" y="78.8" font-size="10.5" font-weight="400" fill="#a9aeb5" textLength="76.6" lengthAdjust="spacingAndGlyphs" >Sketched Bend</text><text x="332.6" y="104.7" font-size="10.5" font-weight="400" fill="#a9aeb5" textLength="60.3" lengthAdjust="spacingAndGlyphs" >Cross-Break</text><text x="547.9" y="53" font-size="10.5" font-weight="400" fill="#a9aeb5" textLength="68.3" lengthAdjust="spacingAndGlyphs" >Forming Tool</text><text x="547.9" y="78.8" font-size="10.5" font-weight="400" fill="#a9aeb5" textLength="99.5" lengthAdjust="spacingAndGlyphs" >Sheet Metal Gusset</text><text x="547.9" y="104.7" font-size="10.5" font-weight="400" fill="#a9aeb5" textLength="64.5" lengthAdjust="spacingAndGlyphs" >Tab and Slot</text><text x="687.9" y="53" font-size="10.5" font-weight="400" fill="#a9aeb5" textLength="67.5" lengthAdjust="spacingAndGlyphs" >Extruded Cut</text><text x="687.9" y="78.8" font-size="10.5" font-weight="400" fill="#a9aeb5" textLength="61.3" lengthAdjust="spacingAndGlyphs" >Simple Hole</text><text x="687.9" y="104.7" font-size="10.5" font-weight="400" fill="#a9aeb5" textLength="23.3" lengthAdjust="spacingAndGlyphs" >Vent</text><text x="792.9" y="53" font-size="10.5" font-weight="400" fill="#a9aeb5" textLength="58.8" lengthAdjust="spacingAndGlyphs" >Normal Cut</text><text x="892.1" y="53" font-size="10.5" font-weight="400" fill="#a9aeb5" textLength="36.3" lengthAdjust="spacingAndGlyphs" >Unfold</text><text x="892.1" y="78.8" font-size="10.5" font-weight="400" fill="#a9aeb5" textLength="22.8" lengthAdjust="spacingAndGlyphs" >Fold</text><text x="892.1" y="104.7" font-size="10.5" font-weight="400" fill="#a9aeb5" textLength="36.3" lengthAdjust="spacingAndGlyphs" >Flatten</text><text x="8.4" y="131.8" font-size="12" font-weight="400" fill="#141a24" textLength="43.9" lengthAdjust="spacingAndGlyphs" >Features</text><text x="69.9" y="131.8" font-size="12" font-weight="400" fill="#141a24" textLength="34.9" lengthAdjust="spacingAndGlyphs" >Sketch</text><text x="123.8" y="131.8" font-size="12" font-weight="700" fill="#141a24" textLength="68.4" lengthAdjust="spacingAndGlyphs" >Sheet Metal</text><text x="208.0" y="131.8" font-size="12" font-weight="400" fill="#141a24" textLength="44.6" lengthAdjust="spacingAndGlyphs" >Evaluate</text><text x="267.9" y="131.8" font-size="12" font-weight="400" fill="#141a24" textLength="117.5" lengthAdjust="spacingAndGlyphs" >SOLIDWORKS Add-Ins</text><text x="33.6" y="209.9" font-size="12" font-weight="700" fill="#111" textLength="108.8" lengthAdjust="spacingAndGlyphs" >Sketch/Curve Color</text><text x="8.6" y="272.1" font-size="11" font-weight="700" fill="#333b48" textLength="47.5" lengthAdjust="spacingAndGlyphs" >Selection</text><text x="40.9" y="294.9" font-size="11" font-weight="400" fill="#0a0a1a" textLength="31.1" lengthAdjust="spacingAndGlyphs" >LOGO</text><text x="74.1" y="340" font-size="11" font-weight="400" fill="#9c9c9c" textLength="71.4" lengthAdjust="spacingAndGlyphs" >Remove Color</text><text x="9.2" y="375.8" font-size="11" font-weight="700" fill="#333b48" textLength="42.1" lengthAdjust="spacingAndGlyphs" >Favorite</text><text x="40.3" y="428" font-size="11" font-weight="400" fill="#111" textLength="45.7" lengthAdjust="spacingAndGlyphs" >standard</text><text x="9.0" y="546.6" font-size="11" font-weight="700" fill="#333b48" textLength="84.5" lengthAdjust="spacingAndGlyphs" >Color Properties</text><text x="9.0" y="578.8" font-size="11" font-weight="700" fill="#333b48" textLength="155.4" lengthAdjust="spacingAndGlyphs" >Configurations/Display States</text><text x="45.9" y="599.4" font-size="11" font-weight="400" fill="#101828" textLength="95.2" lengthAdjust="spacingAndGlyphs" >This configuration</text><text x="45.9" y="618.8" font-size="11" font-weight="400" fill="#101828" textLength="92.1" lengthAdjust="spacingAndGlyphs" >All configurations</text><text x="45.9" y="638.5" font-size="11" font-weight="400" fill="#101828" textLength="114.9" lengthAdjust="spacingAndGlyphs" >Specify configurations</text><text x="94.1" y="667" font-size="11" font-weight="400" fill="#c2c2c2" textLength="63.1" lengthAdjust="spacingAndGlyphs" >Wood Front</text><text x="117.0" y="687.1" font-size="11" font-weight="400" fill="#c2c2c2" textLength="38.1" lengthAdjust="spacingAndGlyphs" >Default</text><text x="104.1" y="1056.9" font-size="11.5" font-weight="700" fill="#111" textLength="35.3" lengthAdjust="spacingAndGlyphs" >Model</text><text x="159.0" y="1056.9" font-size="11.5" font-weight="400" fill="#111" textLength="47.2" lengthAdjust="spacingAndGlyphs" >3D Views</text><text x="225.9" y="1056.9" font-size="11.5" font-weight="400" fill="#111" textLength="80.9" lengthAdjust="spacingAndGlyphs" >Motion Study 1</text><text x="1.0" y="1075.8" font-size="11.5" font-weight="400" fill="#111" textLength="184.4" lengthAdjust="spacingAndGlyphs" >Select entities to modify their color</text><text x="1813.6" y="1076" font-size="11.5" font-weight="400" fill="#8e969c" textLength="36.8" lengthAdjust="spacingAndGlyphs" >MMGS</text><text x="275.1" y="158.8" font-size="12" font-weight="400" fill="#111" textLength="139.5" lengthAdjust="spacingAndGlyphs" >Wood Front (Default) &lt;&lt;...</text><text x="141.1" y="706.6" font-size="11.6" font-weight="400" fill="#c2c2c2" clip-path="url(#clipTree)">&lt;Default&gt;_Display State 1</text><text x="267.1" y="951.5" font-size="9" font-weight="400" fill="#1a8a1a" textLength="6.8" lengthAdjust="spacingAndGlyphs" >Y</text><text x="303.1" y="988.5" font-size="9" font-weight="400" fill="#d02020" textLength="6.8" lengthAdjust="spacingAndGlyphs" >X</text></svg></div></body></html>
